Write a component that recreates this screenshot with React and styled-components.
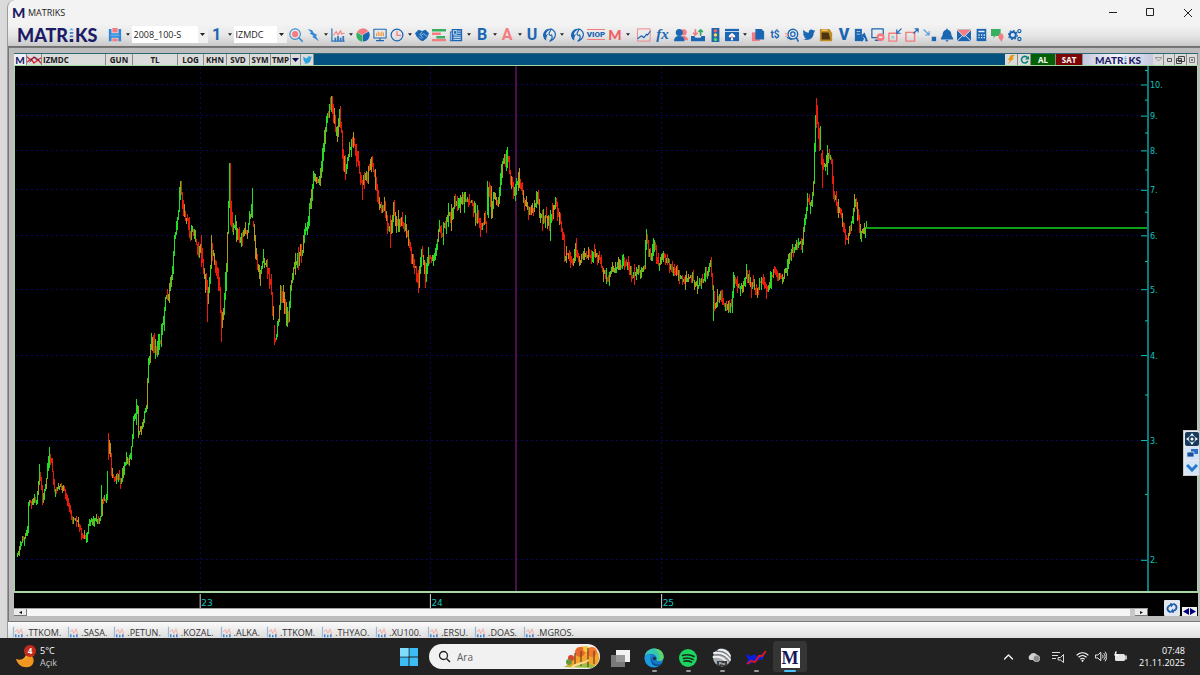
import React from "react";
import styled, { createGlobalStyle } from "styled-components";

const UI = `"Open Sans", "Noto Sans", sans-serif`;
const BLUE = "#1b66b3";
const PINK = "#f47c80";
const GREEN = "#35b060";
const NAVY = "#1c1c66";
const TEAL = "#12c2bd";

const Global = createGlobalStyle`
  * { box-sizing: border-box; }
  body { margin: 0; background: #dadada; font: 9px/12px ${UI}; color: #222; }
  button { border: 0; padding: 0; margin: 0; background: none; font: inherit; color: inherit; }
  svg { display: block; flex: none; }
`;

const Desktop = styled.div`
  height: 100vh;
  min-height: 400px;
  display: flex;
  flex-direction: column;
  overflow: hidden;
`;
const Window = styled.main`
  position: relative;
  flex: 1;
  min-height: 0;
  margin-left: 7px;
  display: flex;
  flex-direction: column;
  border-radius: 8px 0 0 0;
  border-left: 1px solid #9b9b9b;
  background: #f3f3f3;
  overflow: hidden;
`;
const TitleBar = styled.header`
  height: 25px;
  flex: none;
  display: flex;
  align-items: center;
  padding-left: 4px;
`;
const AppMark = styled.span`
  width: 15px;
  font: 900 14px/16px Lato, sans-serif;
  color: ${NAVY};
`;
const AppName = styled.h1`
  flex: 1;
  margin: 0 0 0 1px;
  font: 400 9px/12px ${UI};
`;
const WindowButtons = styled.div`
  display: flex;
  gap: 12px;
`;
const WindowButton = styled.button`
  width: 25px;
  height: 25px;
  display: grid;
  place-items: center;
`;

const Toolbar = styled.div`
  height: 22px;
  flex: none;
  display: flex;
  align-items: center;
  padding: 0 0 2px 9px;
  background: linear-gradient(#f2f2f2, #e6e6e6 50%, #c9c9c9);
  border-bottom: 1px solid #6f6f6f;
`;
const Group = styled.div`
  display: flex;
  align-items: center;
  height: 19px;
  margin-left: ${(p) => p.$gap || 0}px;
`;
const Tool = styled.button`
  width: ${(p) => p.$w || 17}px;
  height: 18px;
  display: grid;
  place-items: center;
`;
const Letter = styled.span`
  font: ${(p) => p.$font || "700 16px/16px Roboto, sans-serif"};
  color: ${(p) => p.$color || BLUE};
`;
const Viop = styled.span`
  font: 900 8px/9px Roboto, sans-serif;
  color: ${BLUE};
  border-top: 1px solid ${PINK};
  border-bottom: 1px solid ${PINK};
`;
const CaretButton = styled.button`
  width: 8px;
  height: 18px;
  display: grid;
  place-items: center;
`;
const Logo = styled.span`
  display: flex;
  align-items: center;
  gap: 1px;
  font: 900 ${(p) => p.$size}px / ${(p) => p.$size}px Lato, sans-serif;
  color: ${NAVY};
`;
const Combo = styled.label`
  position: relative;
  display: flex;
  align-items: center;
  width: ${(p) => p.$w}px;
  height: 17px;
  background: #fff;
`;
const Select = styled.select`
  appearance: none;
  width: 100%;
  height: 17px;
  border: 0;
  padding: 0 10px 0 2px;
  background: transparent;
  font: 9px/12px ${UI};
  color: #222;
`;
const ComboArrow = styled.span`
  position: absolute;
  right: 0;
  top: 0;
  width: 10px;
  height: 17px;
  display: grid;
  place-items: center;
  background: #f0f0f0;
  pointer-events: none;
`;

const Workspace = styled.section`
  flex: 1;
  min-height: 0;
  display: flex;
  flex-direction: column;
  padding: 5px 2px 5px 5px;
  border: solid #777;
  border-width: 1px 0 1px 1px;
  background: #bcbcbc;
`;
const ChartHeader = styled.div`
  height: 12px;
  flex: none;
  display: flex;
  background: #04507f;
  border-top: 1px solid #2e6673;
`;
const HeadButton = styled.button`
  width: ${(p) => p.$w}px;
  height: 11px;
  display: flex;
  align-items: center;
  justify-content: ${(p) => (p.$left ? "flex-start" : "center")};
  padding-left: ${(p) => (p.$left ? 1 : 0)}px;
  border-right: 1px solid #8a8a8a;
  background: ${(p) => p.$bg || "#dcdcdc"};
  color: ${(p) => p.$color || "#202020"};
  font: 700 8px/10px "Open Sans", sans-serif;
  overflow: hidden;
`;
const Spacer = styled.div`
  flex: 1;
`;
const Plate = styled.div`
  width: 70px;
  display: grid;
  place-items: center;
  background: linear-gradient(90deg, #c5c9e0, #f4f4fa 50%, #c5c9e0);
`;
const ChartBox = styled.div`
  flex: 1;
  min-height: 0;
  display: flex;
  background: #000;
  border: 1px solid #a5d8a0;
  border-bottom-width: 2px;
`;
const Plot = styled.svg`
  flex: 1;
  min-width: 0;
  height: 100%;
`;
const PriceAxis = styled.svg`
  width: 50px;
  height: 100%;
  overflow: visible;
`;
const ChartFooter = styled.div`
  height: 23px;
  flex: none;
  display: flex;
  background: #000;
`;
const TimeColumn = styled.div`
  flex: 1;
  min-width: 0;
`;
const TimeAxis = styled.svg`
  width: 100%;
  height: 15px;
`;
const ScrollTrack = styled.div`
  height: 8px;
  display: flex;
  justify-content: space-between;
  background: #f6f6f6;
  border-top: 1px solid #a0a0a0;
`;
const ScrollButton = styled.button`
  width: 13px;
  height: 7px;
  display: grid;
  place-items: center;
  background: #ececec;
  border: solid #777;
  border-width: 0 1px 1px 0;
`;
const ScrollEnd = styled.div`
  display: flex;
  border-left: 5px solid #c8c8c8;
`;
const FooterTools = styled.div`
  width: 50px;
  display: flex;
  align-items: flex-end;
  justify-content: flex-end;
  gap: 2px;
  padding-right: 1px;
`;
const RefreshButton = styled.button`
  width: 16px;
  height: 16px;
  display: grid;
  place-items: center;
  background: #e2e6ee;
  border-radius: 1px;
`;
const StepButtons = styled.div`
  display: flex;
  width: 15px;
  height: 9px;
  background: #f0f0f0;
`;
const StepButton = styled.button`
  flex: 1;
  display: grid;
  place-items: center;
`;
const Dock = styled.aside`
  position: absolute;
  right: 0;
  bottom: 162px;
  width: 17px;
  padding: 1px 0 1px 1px;
  display: flex;
  flex-direction: column;
  gap: 1px;
  background: #e6e8ec;
  border: 1px solid #c2c6cc;
`;
const DockButton = styled.button`
  height: ${(p) => p.$h || 13}px;
  display: grid;
  place-items: center;
  border-radius: 2px;
  background: ${(p) => p.$bg || "#d3e4f8"};
`;

const PageTabs = styled.nav`
  height: 16px;
  flex: none;
  display: flex;
  gap: 6px;
  padding: 4px 0 0 4px;
  overflow: hidden;
  background: linear-gradient(#fbfbfb, #dddddd);
`;
const PageTab = styled.a`
  display: flex;
  gap: 2px;
  color: #333;
  text-decoration: none;
  line-height: 14px;
`;

const Taskbar = styled.footer`
  height: 37px;
  flex: none;
  display: grid;
  grid-template-columns: 1fr auto 1fr;
  align-items: center;
  background: #222;
  color: #fff;
`;
const Weather = styled.button`
  position: relative;
  justify-self: start;
  display: flex;
  align-items: center;
  gap: 5px;
  margin-left: 16px;
  text-align: left;
  color: #fff;
`;
const Sub = styled.span`
  display: block;
  color: ${(p) => p.$color || "#c8c8c8"};
`;
const Badge = styled.span`
  position: absolute;
  left: 8px;
  top: 0;
  width: 12px;
  height: 12px;
  border-radius: 50%;
  background: #c42b1c;
  font: 700 8px/12px ${UI};
  text-align: center;
`;
const Apps = styled.div`
  display: flex;
  align-items: center;
  margin-left: 6px;
`;
const SearchBox = styled.label`
  width: 171px;
  height: 25px;
  display: flex;
  align-items: center;
  gap: 6px;
  margin: 0 3px 0 10px;
  padding-left: 9px;
  border-radius: 13px;
  background: #f1f1f1;
  overflow: hidden;
`;
const SearchInput = styled.input`
  flex: 1;
  min-width: 0;
  border: 0;
  padding: 0;
  background: transparent;
  font: 10px/14px ${UI};
  color: #555;
  outline: 0;
  &::placeholder { color: #606060; opacity: 1; }
`;
const AppButton = styled.button`
  width: 34px;
  height: 31px;
  display: flex;
  flex-direction: column;
  align-items: center;
  justify-content: flex-end;
  gap: 2px;
  border-radius: 3px;
  background: ${(p) => (p.$active ? "#353535" : "transparent")};
`;
const Indicator = styled.span`
  width: ${(p) => (p.$active ? 12 : 5)}px;
  height: 2px;
  border-radius: 1px;
  background: ${(p) => (p.$active ? "#4cc2ff" : p.$off ? "transparent" : "#9a9a9a")};
`;
const MTile = styled.span`
  width: 19px;
  height: 20px;
  background: #fff;
  color: #17175c;
  text-align: center;
  font: 700 18px/20px "Liberation Serif", serif;
`;
const Tray = styled.div`
  justify-self: end;
  display: flex;
  align-items: center;
  margin-right: 15px;
`;
const TrayButton = styled.button`
  width: ${(p) => p.$w}px;
  height: 24px;
  display: grid;
  place-items: center;
`;
const Clock = styled.button`
  text-align: right;
  color: #fff;
  margin-left: 8px;
`;

/* ---------- icons ---------- */
const s = (stroke, w = 1.6) => ({ fill: "none", stroke, strokeWidth: w, strokeLinecap: "round", strokeLinejoin: "round" });
const flame = (
  <g>
    <path d="M5 14.500a7 7 0 0 1-2-11a7 7 0 0 1 7-2.300c-4 2.300-5.500 4-5.500 7c1-1 1.500-1.200 2.500-1.200c-2 2.500-2.500 5-2 7.500z" fill={BLUE} />
    <path d="M10 1c4 1 6 5 5 8c-1 4-3 5-6 6c3-3 3-4 2-7c-2 1-3 0-3-2c1-2 2-3 2-5z" {...s(BLUE, 1.4)} />
  </g>
);
const bird = (c) => (
  <path d="M15 4l-1.600 1.400C13.600 11 9 15 1 13.200c2 0 3-.5 4-1.400c-1.500-.2-2.400-1-2.800-2.200h1.300C1.900 9 1.200 7.800 1.200 6.300l1.300.4C1.200 5.500.9 4 1.700 2.300C3.300 4.200 5.300 5.300 7.700 5.500C7.500 1.800 11 .8 12.900 2.900L15 2.400l-1 1.500z" fill={c} />
);
const ICONS = {
  floppy: (
    <g>
      <path d="M1 1h3v5h8V1h3v14h-3v-4H4v4H1z" fill="#2f86d4" />
      <path d="M5 0h6v5H5zM5 12h6v3H5z" fill={PINK} />
      <path d="M3 8.500h10" stroke="#62b1f2" strokeWidth="2" />
    </g>
  ),
  zoom: (
    <g>
      <circle cx="7" cy="7" r="6" {...s("#3a8bd0", 1.3)} />
      <circle cx="7" cy="7" r="3.500" fill={PINK} />
      <path d="M11.500 11.500L15 15" {...s("#3a8bd0", 1.8)} />
    </g>
  ),
  bolt: <path d="M2 1l5 1.500L9 6l4 2-2 1 4 6-8-5 2-1-5-3 2-1z" fill="#2f86d4" />,
  bars: (
    <g>
      <path d="M1 1v14h14" {...s("#2f78c0", 1.4)} />
      <path d="M4 15v-4h2v4zM7 15V9h2v6zM10 15v-4h2v4zM13 15V9h2v6z" fill="#2f78c0" />
      <path d="M3 8l3-4 2 4 3-5 1 4 3-1" {...s(PINK, 1.2)} />
    </g>
  ),
  tab: (
    <g>
      <path d="M2 1v14" stroke="#9db7d6" strokeWidth="1.600" />
      <path d="M4 8l3-3 2 5 3-6 2 6v5" fill="none" stroke="#f0b4b0" strokeWidth="1.400" />
      <path d="M5 15v-4M9 15v-3M13 15v-4" fill="none" stroke="#3f87cf" strokeWidth="2" />
    </g>
  ),
  pie: (
    <g>
      <path d="M8 8L1 5a7.500 7.500 0 0 1 13-1.500z" fill={PINK} />
      <path d="M8 8l6.500-4A7.500 7.500 0 0 1 8 15.500z" fill={BLUE} />
      <path d="M7.500 8.500L1 5a7.500 7.500 0 0 0 6.500 10.500z" fill={GREEN} />
    </g>
  ),
  monitor: (
    <g>
      <rect x="1" y="1.500" width="14" height="10" {...s(BLUE, 1.2)} />
      <path d="M4 9V6M6 9V4M8 9V5M10 9V4M12 9V5" stroke="#f0963c" strokeWidth="1.200" />
      <path d="M8 12v2M4 14.500h8" {...s(BLUE, 1.4)} />
    </g>
  ),
  clock: (
    <g>
      <circle cx="8" cy="8" r="6.700" {...s(BLUE, 1.4)} />
      <path d="M8 4v4.500h4" {...s(PINK, 1.5)} />
    </g>
  ),
  hands: (
    <g>
      <path d="M0 6l4-4 4 1.500L12 2l4 4-2 5-5 4-3-1-4-4z" fill={BLUE} />
      <path d="M8 4.500L5.500 7.500l2 .5L10 6.500l4 3.500M5 10l2 2M7 9l2 2" {...s("#d5e5f5", 0.7)} />
    </g>
  ),
  lines: (
    <g>
      <path d="M0 1h16v3H0zM5 9h10v3H5z" fill={GREEN} />
      <path d="M0 5h10v3H0zM0 12.500h16v2.500H0z" fill={PINK} />
    </g>
  ),
  news: (
    <g>
      <path d="M3 1h12v14H1V4h2z" fill={BLUE} />
      <path d="M5 3h4v4H5zM10 3.500h3.500M10 6h3.500M5 9h8.500M5 11h8.500M5 13h8.500M2.500 5v9" stroke="#e8eef6" strokeWidth="1" fill="none" />
    </g>
  ),
  flame,
  trend: (
    <g>
      <rect x="1" y="1" width="14" height="14" {...s(PINK, 1)} />
      <path d="M1 12l4-3 3 2 3-4 1 1 3-4" {...s(BLUE, 1.4)} />
    </g>
  ),
  people: (
    <g>
      <circle cx="11" cy="5" r="3.500" fill={PINK} />
      <path d="M8 14c0-4 1-5 3-5s5 1 5 5z" fill={PINK} />
      <circle cx="6" cy="5" r="4" fill={BLUE} />
      <path d="M0 15c0-4 2-6 6-6s6 2 6 6z" fill={BLUE} />
    </g>
  ),
  trays: (
    <g>
      <path d="M0 9h4l1 2h6l1-2h4v6H0z" fill={BLUE} />
      <path d="M5 2v6M3 6l2 2 2-2" {...s(PINK, 2)} />
      <path d="M11 8V2M9 4l2-2 2 2" {...s(GREEN, 2)} />
    </g>
  ),
  traffic: (
    <g>
      <rect x="4" y="0" width="9" height="16" fill={BLUE} />
      <circle cx="8.500" cy="3" r="2" fill="#ff6060" />
      <circle cx="8.500" cy="8" r="2" fill="#ffe040" />
      <circle cx="8.500" cy="13" r="2" fill="#50d860" />
    </g>
  ),
  calendar: (
    <g>
      <path d="M0 1h16v14H0z" fill={BLUE} />
      <path d="M0 4h16" stroke="#d7e4f2" strokeWidth="1" />
      <path d="M8 13V8M5.500 9.500L8 7l2.500 2.500" {...s("#fff", 2.4)} />
      <path d="M8 12V8.500" stroke={PINK} strokeWidth="1.500" />
    </g>
  ),
  copy: (
    <g>
      <path d="M1 5h9v10H1z" fill={PINK} />
      <path d="M5 1h7l3 3v9H5z" fill={BLUE} />
    </g>
  ),
  magnify: (
    <g>
      <circle cx="9" cy="7" r="5.500" {...s(BLUE, 1.6)} />
      <circle cx="9" cy="7" r="2.500" {...s(BLUE, 1.4)} />
      <path d="M13 11l2 4M3 11l4 2" {...s(BLUE, 1.8)} />
      <path d="M0 10l4-2M0 6l3 1" {...s(PINK, 1)} />
    </g>
  ),
  bird: bird(BLUE),
  gold: (
    <g>
      <path d="M1 1h11l3 5v9H1z" fill="#c18c24" />
      <path d="M3 5h8l2 8H3z" fill="#4a3414" />
      <path d="M3 2.500h7" stroke="#efcf78" strokeWidth="1.500" />
    </g>
  ),
  building: (
    <g>
      <path d="M1 1h8v14H1z" fill={BLUE} />
      <path d="M9 8l3-3 4 10h-3l-1-4-2 4H8z" fill={BLUE} />
      <path d="M3 4h4M3 7h4M10 10l3 3" stroke="#d8e6f4" strokeWidth=".8" />
    </g>
  ),
  blocked: (
    <g>
      <rect x="1" y="1" width="13" height="10" {...s(BLUE, 1.4)} />
      <path d="M5 14h5" {...s(BLUE, 1.5)} />
      <circle cx="11" cy="10.500" r="4.500" fill={PINK} />
      <path d="M9 10.500h4" stroke="#fff" strokeWidth="1.500" />
    </g>
  ),
  boxIn: (
    <g>
      <rect x="1" y="6" width="9" height="9" {...s(PINK, 1.6)} />
      <rect x="4" y="9" width="3" height="3" fill="#9cc" />
      <path d="M15 1l-5 5M10 2v4h4" {...s(BLUE, 1.3)} />
    </g>
  ),
  boxOut: (
    <g>
      <rect x="1" y="5" width="10" height="10" {...s(PINK, 1.6)} />
      <path d="M10 6l5-5M11.500 1H15v3.500" {...s(BLUE, 1.3)} />
    </g>
  ),
  arrowBox: (
    <g>
      <path d="M1 2l6 6M7 4v4H3" {...s("#5b9cd8", 1.3)} />
      <rect x="10" y="10" width="5" height="5" fill={BLUE} />
    </g>
  ),
  bell: <path d="M8 0l1 2c3 1 4 3 4 6l2 4v1H1v-1l2-4c0-3 1-5 4-6zM6 14h4l-2 2z" fill={BLUE} />,
  mail: (
    <g>
      <path d="M0 2h16v13H0z" fill={BLUE} />
      <path d="M0 2h16l-8 8z" fill={PINK} />
      <path d="M0 15l6-6M16 15l-6-6M0 2l8 8 8-8" {...s("#f2f2f2", 1)} />
    </g>
  ),
  calc: (
    <g>
      <rect x="3" y="1" width="11" height="14" fill={BLUE} />
      <path d="M5 4h7M5 8h1.500M8 8h1.500M11 8h1.500M5 11h1.500M8 11h1.500M11 11h1.500" stroke="#e3edf8" strokeWidth="1.600" />
    </g>
  ),
  chat: (
    <g>
      <path d="M0 1h11v8H5l-2 3V9H0z" fill={GREEN} />
      <path d="M11 6a4 4 0 0 1 2 7l-1 3-2-3a4 4 0 0 1 1-7z" fill={PINK} />
    </g>
  ),
  gears: (
    <g>
      <circle cx="5.500" cy="8" r="3.500" {...s(BLUE, 2.2)} />
      <circle cx="5.500" cy="8" r="5.200" fill="none" stroke={BLUE} strokeWidth="1.200" strokeDasharray="2 2" />
      <circle cx="13" cy="3.500" r="1.800" {...s(BLUE, 1.4)} />
      <circle cx="13" cy="12.500" r="1.800" {...s(BLUE, 1.4)} />
    </g>
  ),
};
const Icon = ({ name, size = 14 }) => (
  <svg width={size} height={size} viewBox="0 0 16 16" aria-hidden="true">
    {ICONS[name]}
  </svg>
);
const Caret = ({ w = 5 }) => (
  <svg width={w} height="3" viewBox="0 0 5 3" aria-hidden="true">
    <path d="M0 0h5L2.500 3z" fill="#222" />
  </svg>
);
const BrandLogo = ({ size }) => (
  <Logo $size={size}>
    MATR
    <svg width={Math.round(size / 4)} height={Math.round(size * 0.75)} viewBox="0 0 4 12" aria-hidden="true">
      <path d="M2 0l2 2H0z" fill="#58b7e8" />
      <path d="M.5 3.500h3v1.500h-3zM.5 6.500h3V8h-3z" fill="#3f7cc0" />
      <path d="M.5 9.500h3V12h-3z" fill={NAVY} />
    </svg>
    KS
  </Logo>
);

/* ---------- toolbar contents ---------- */
const TOOL_GROUPS = [
  { gap: 1, items: ["zoom", "bolt", "|", "bars", "|"] },
  { gap: 0, items: ["pie", "monitor", "clock", "|"] },
  { gap: 0, items: ["hands", "lines", "news", "|"] },
  { gap: 1, items: ["B", "|", "A", "|", "U", "flame", "|"] },
  { gap: 3, items: ["flame", "VIOP", "M", "|"] },
  { gap: 4, items: ["trend", "fx", "people", "trays", "traffic", "calendar", "|"] },
  { gap: 1, items: ["copy", "t$", "magnify", "bird", "gold"] },
  { gap: 1, items: ["V", "building", "blocked", "boxIn", "boxOut"] },
  { gap: 1, items: ["arrowBox", "bell", "mail", "calc", "chat", "gears"] },
];
const LETTERS = {
  A: { $color: PINK },
  M: { $color: "#ee5f63", $font: "900 14px/16px Lato, sans-serif" },
  fx: { $font: 'italic 700 15px/15px "Liberation Serif", serif' },
  "t$": { $font: "700 10px/12px Roboto, sans-serif" },
  V: { $font: "900 16px/16px Roboto, sans-serif" },
};
function ToolItem({ id }) {
  if (id === "|") return <CaretButton aria-label="Menü"><Caret w={4} /></CaretButton>;
  if (id === "VIOP") return <Tool $w={21} aria-label="VIOP"><Viop>VIOP</Viop></Tool>;
  if (ICONS[id]) return <Tool aria-label={id}><Icon name={id} /></Tool>;
  return (
    <Tool $w={id === "fx" ? 20 : 17}>
      <Letter {...LETTERS[id]}>{id}</Letter>
    </Tool>
  );
}

/* ---------- price series ---------- */
const PATH =
  "17,556 20,545 25,533 27,527 28,503 33,500 36,500 38,486 39,472 41,487 42,499 45,486 47,468 49,454 51,462 53,482 54,492 58,485 62,488 66,495 69,510 72,520 75,518 79,525 82,536 86,537 88,526 91,520 94,519 98,522 101,516 102,500 106,498 107,470 108,440 110,455 111,474 114,478 118,476 120,482 123,468 126,458 128,464 130,454 132,438 133,415 135,416 137,408 138,432 141,427 143,420 144,412 146,408 147,380 148,360 150,350 151,338 153,346 156,352 158,345 161,335 163,318 165,298 168,300 170,285 172,270 174,240 176,228 178,208 180,186 182,200 184,215 187,221 189,238 192,230 195,236 198,255 200,243 203,270 205,280 207,300 209,280 211,248 214,258 217,278 219,292 221,325 224,300 226,265 228,205 229,170 230,205 232,232 235,225 239,238 243,232 247,228 251,213 253,225 255,250 258,272 260,275 263,258 266,265 269,275 271,290 273,320 274,340 276,332 279,308 280,292 283,300 286,322 288,315 290,288 292,270 296,262 299,254 302,250 304,232 307,225 310,200 313,178 316,178 319,182 322,152 324,140 326,115 328,112 331,101 333,112 335,130 337,130 339,116 341,135 343,160 345,166 348,155 350,150 353,138 355,145 358,165 361,184 364,178 367,172 371,163 375,182 378,200 381,210 384,205 387,225 390,226 393,214 397,222 401,220 405,226 408,240 412,258 415,270 418,284 421,252 425,278 428,252 431,260 434,258 437,240 438,228 442,232 445,222 447,213 450,218 454,205 459,203 463,197 466,200 470,201 473,210 477,214 480,228 484,222 486,224 488,190 490,196 491,220 493,192 495,200 497,208 499,190 501,168 504,160 507,156 510,175 513,195 515,190 518,176 521,190 525,205 528,210 532,210 535,205 537,197 540,218 545,217 549,225 553,210 556,206 559,220 562,233 563,236 564,258 568,254 572,262 575,248 579,262 583,254 588,256 593,255 598,255 602,268 605,276 608,279 611,268 616,269 620,262 626,262 628,270 633,275 637,270 642,268 644,265 645,240 646,232 648,252 651,252 654,247 658,263 662,256 667,260 671,268 676,270 683,280 690,278 697,285 702,280 706,272 710,266 712,285 714,305 716,300 720,295 725,307 731,306 734,280 738,288 742,285 746,275 751,285 756,292 761,278 766,290 769,285 774,268 778,275 782,280 787,262 792,250 797,242 802,244 804,220 807,200 811,203 813,182 814,150 815,115 816,108 817,120 819,150 822,165 825,165 828,157 831,160 833,192 837,205 840,208 843,225 846,238 850,228 853,210 855,202 858,220 860,234 863,231 866,228";
/* long wicks: bar position -> [high, low] */
const WICKS = {
  39: [464, 485], 42: [485, 505], 49: [447, 468], 101: [485, 517], 108: [433, 460], 126: [452, 465], 136: [399, 425],
  151: [333, 350], 180: [181, 200], 207: [280, 322], 221: [310, 342], 229: [163, 208], 230: [163, 225], 252: [188, 218],
  274: [325, 345], 331: [96, 112], 345: [155, 180], 353: [132, 148], 362: [180, 200], 371: [157, 172], 390: [215, 248],
  418: [270, 293], 425: [262, 288], 480: [218, 237], 487: [181, 215], 507: [147, 168], 536: [191, 208], 646: [229, 250],
  653: [238, 256], 713: [285, 321], 733: [272, 298], 816: [98, 128], 820: [126, 150], 822: [150, 188], 827: [145, 175], 854: [194, 212],
};
const FALLING = [230, 816, 108, 221, 274];
const RISING = [252, 487, 507, 713, 820, 331];
function buildBars() {
  const pts = PATH.split(" ").map((p) => p.split(",").map(Number));
  let seed = 11;
  const rnd = () => {
    seed = (seed * 16807) % 2147483647;
    return seed / 2147483647;
  };
  const out = { up: "", down: "", flat: "" };
  let i = 0;
  let prev = pts[0][1];
  for (let x = 17; x <= 866; x++) {
    while (i < pts.length - 2 && pts[i + 1][0] < x) i++;
    const [x0, y0] = pts[i];
    const [x1, y1] = pts[i + 1];
    const amp = x < 150 ? 4 : x < 560 ? 8 : 6;
    const y = y0 + ((y1 - y0) * (x - x0)) / (x1 - x0) + (rnd() - 0.5) * amp;
    let hi = Math.min(y, prev) - rnd() * rnd() * amp * 1.7;
    let lo = Math.max(y, prev) + rnd() * rnd() * amp * 1.7 + 1;
    if (WICKS[x]) {
      hi = WICKS[x][0];
      lo = WICKS[x][1];
    }
    let kind = rnd() < 0.22 ? "flat" : y <= prev ? "up" : "down";
    if (FALLING.includes(x)) kind = "down";
    if (RISING.includes(x)) kind = "up";
    out[kind] += `M${x}.5 ${Math.round(hi)}V${Math.round(lo)}`;
    prev = y;
  }
  return out;
}
const BARS = buildBars();

const TOP = 66;
const H = 525;
const priceY = (v) => 85 + Math.log10(10 / v) * 680;
const PRICES = [10, 9, 8, 7, 6, 5, 4, 3, 2];
const HALVES = [10.5, 9.5, 8.5, 7.5, 6.5, 5.5, 4.5, 3.5, 2.5];
const pct = (y) => `${(((y - TOP) / H) * 100).toFixed(2)}%`;
const YEARS = [
  ["23", 200],
  ["24", 430],
  ["25", 661],
];

function PriceChart() {
  return (
    <ChartBox>
      <Plot viewBox={`15 ${TOP} 1132 ${H}`} preserveAspectRatio="none" role="img" aria-label="IZMDC">
        <g stroke="#07075e" strokeWidth="1" strokeDasharray="2 3">
          {PRICES.map((v) => (
            <path key={v} d={`M16 ${Math.round(priceY(v)) - 0.5}H1146`} />
          ))}
          {YEARS.map(([n, x]) => (
            <path key={n} d={`M${x}.5 67V591`} />
          ))}
        </g>
        <path d="M516 66V591" stroke="#47104b" strokeWidth="2" />
        <path d={BARS.flat} stroke="#b09a1c" strokeWidth="1" />
        <path d={BARS.down} stroke="#ec1a0a" strokeWidth="1" />
        <path d={BARS.up} stroke="#22dc26" strokeWidth="1" />
        <path d="M866 228H1147" stroke="#0fa01b" strokeWidth="2" />
      </Plot>
      <PriceAxis aria-hidden="true">
        <line x1="1" x2="1" y1="0" y2="100%" stroke="#087b7c" strokeWidth="2" />
        {PRICES.map((v) => (
          <React.Fragment key={v}>
            <line x1="-6" x2="0" y1={pct(priceY(v))} y2={pct(priceY(v))} stroke={TEAL} />
            <text x="3" y={pct(priceY(v))} dy="3" fill={TEAL} fontFamily="DejaVu Sans, sans-serif" fontSize="8">
              {v}.
            </text>
          </React.Fragment>
        ))}
        {HALVES.map((v) => (
          <line key={v} x1="-2" x2="1" y1={pct(priceY(v))} y2={pct(priceY(v))} stroke={TEAL} />
        ))}
      </PriceAxis>
    </ChartBox>
  );
}

const TABS = ["TTKOM", "SASA", "PETUN", "KOZAL", "ALKA", "TTKOM", "THYAO", "XU100", "ERSU", "DOAS", "MGROS"];
const FIELDS = [
  ["GUN", 27],
  ["TL", 45],
  ["LOG", 26],
  ["KHN", 23],
  ["SVD", 23],
  ["SYM", 21],
  ["TMP", 20],
];

export default function App() {
  return (
    <Desktop>
      <Global />
      <Window>
        <TitleBar>
          <AppMark>M</AppMark>
          <AppName>MATRIKS</AppName>
          <WindowButtons>
            <WindowButton aria-label="Küçült">
              <svg width="9" height="9" viewBox="0 0 9 9"><path d="M0 4.500h8" stroke="#222" /></svg>
            </WindowButton>
            <WindowButton aria-label="Ekranı kapla">
              <svg width="9" height="9" viewBox="0 0 9 9"><path d="M.5.500h7v7h-7z" fill="none" stroke="#222" /></svg>
            </WindowButton>
            <WindowButton aria-label="Kapat">
              <svg width="8" height="8" viewBox="0 0 8 8"><path d="M0 0l8 8M8 0L0 8" stroke="#222" /></svg>
            </WindowButton>
          </WindowButtons>
        </TitleBar>

        <Toolbar>
          <BrandLogo size={18} />
          <Group $gap={9}>
            <Tool aria-label="Kaydet"><Icon name="floppy" /></Tool>
            <ToolItem id="|" />
          </Group>
          <Combo $w={76}>
            <Select aria-label="Sayfa"><option>2008_100-S</option></Select>
            <ComboArrow><Caret /></ComboArrow>
          </Combo>
          <Group>
            <Tool $w={18}><Letter>1</Letter></Tool>
            <ToolItem id="|" />
          </Group>
          <Combo $w={53}>
            <Select aria-label="Sembol"><option>IZMDC</option></Select>
            <ComboArrow><Caret /></ComboArrow>
          </Combo>
          {TOOL_GROUPS.map((g, i) => (
            <Group key={i} $gap={g.gap}>
              {g.items.map((id, k) => (
                <ToolItem key={k} id={id} />
              ))}
            </Group>
          ))}
        </Toolbar>

        <Workspace>
          <ChartHeader>
            <HeadButton $w={13} $color={NAVY} $bg="#eef0f8">
              <Letter $color={NAVY} $font="900 10px/10px Lato, sans-serif">M</Letter>
            </HeadButton>
            <HeadButton $w={15} aria-label="Grafik">
              <svg width="14" height="10" viewBox="0 0 14 10">
                <path d="M0 2l4 3 3-3 3 3 4-2M0 7l4-3 3 4 4-3 3 3" {...s("#d8242c", 1.3)} />
                <path d="M3 7c3-6 6-6 9-1" {...s(NAVY, 0.8)} />
              </svg>
            </HeadButton>
            <HeadButton $w={64} $left>IZMDC</HeadButton>
            {FIELDS.map(([n, w]) => (
              <HeadButton key={n} $w={w}>{n}</HeadButton>
            ))}
            <HeadButton $w={10} aria-label="Aç">
              <svg width="7" height="4" viewBox="0 0 7 4"><path d="M0 0h7L3.500 4z" fill="#0a0a50" /></svg>
            </HeadButton>
            <HeadButton $w={13} aria-label="Twitter">
              <svg width="11" height="10" viewBox="0 0 16 16">{bird("#2aa3dc")}</svg>
            </HeadButton>
            <Spacer />
            <HeadButton $w={13} aria-label="Hızlı emir">
              <svg width="8" height="9" viewBox="0 0 8 9"><path d="M4 0h4L5 3h2L1 9l2-4H1z" fill="#e8960c" /></svg>
            </HeadButton>
            <HeadButton $w={13} aria-label="Yenile">
              <svg width="9" height="9" viewBox="0 0 9 9">
                <path d="M7.500 6.500A3.300 3.300 0 1 1 7 2.200" {...s("#0b8478", 1.6)} />
                <path d="M5 4.500h4V1z" fill="#0b8478" />
              </svg>
            </HeadButton>
            <HeadButton $w={25} $bg="#046004" $color="#fff">AL</HeadButton>
            <HeadButton $w={27} $bg="#7c0508" $color="#fff">SAT</HeadButton>
            <Plate><BrandLogo size={10} /></Plate>
            <HeadButton $w={11} aria-label="Menü">
              <svg width="7" height="5" viewBox="0 0 7 5"><path d="M0 .5h7L3.500 4z" fill="none" stroke="#888" strokeWidth=".8" /></svg>
            </HeadButton>
            <HeadButton $w={11} aria-label="Simge">
              <svg width="5" height="5" viewBox="0 0 5 5"><path d="M.5 1.500h4v3h-4z" fill="none" stroke="#555" /></svg>
            </HeadButton>
            <HeadButton $w={12} aria-label="Pencere">
              <svg width="9" height="8" viewBox="0 0 9 8"><path d="M2.500.5h6v5h-6zM.5 2.500h5v5h-5zM1 4.500h5" fill="none" stroke="#444" /></svg>
            </HeadButton>
            <HeadButton $w={11} aria-label="Kapat">
              <svg width="6" height="6" viewBox="0 0 6 6"><path d="M.5.500h5v5h-5zM2 2l2 2M4 2L2 4" fill="none" stroke="#666" strokeWidth=".8" /></svg>
            </HeadButton>
          </ChartHeader>

          <PriceChart />

          <ChartFooter>
            <TimeColumn>
              <TimeAxis aria-hidden="true">
                {YEARS.map(([n, x]) => {
                  const at = `${(((x - 14) / 1133) * 100).toFixed(2)}%`;
                  return (
                    <React.Fragment key={n}>
                      <line x1={at} x2={at} y1="1" y2="15" stroke="#d8d8d8" />
                      <text x={at} dx="1" y="13" fill={TEAL} fontFamily="DejaVu Sans, sans-serif" fontSize="9">{n}</text>
                    </React.Fragment>
                  );
                })}
              </TimeAxis>
              <ScrollTrack>
                <ScrollButton aria-label="Sola kaydır">
                  <svg width="3" height="3" viewBox="0 0 3 3"><path d="M3 0v3L0 1.500z" fill="#111" /></svg>
                </ScrollButton>
                <ScrollEnd>
                  <ScrollButton aria-label="Sağa kaydır">
                    <svg width="3" height="3" viewBox="0 0 3 3"><path d="M0 0v3l3-1.500z" fill="#111" /></svg>
                  </ScrollButton>
                </ScrollEnd>
              </ScrollTrack>
            </TimeColumn>
            <FooterTools>
              <RefreshButton aria-label="Grafiği yenile">
                <svg width="12" height="12" viewBox="0 0 12 12">
                  <path d="M4 10C0 8 1 4 5 3M8 2c4 2 3 6-1 7" {...s("#1b5cab", 1.8)} />
                  <path d="M4 1l4 1-3 3.500zM8 11L4 10l3-3.500z" fill="#1b5cab" />
                </svg>
              </RefreshButton>
              <StepButtons>
                <StepButton aria-label="Geri">
                  <svg width="6" height="7" viewBox="0 0 6 7"><path d="M6 0v7L0 3.500z" fill="#00007c" /></svg>
                </StepButton>
                <StepButton aria-label="İleri">
                  <svg width="6" height="7" viewBox="0 0 6 7"><path d="M0 0v7l6-3.500z" fill="#00007c" /></svg>
                </StepButton>
              </StepButtons>
            </FooterTools>
          </ChartFooter>
        </Workspace>

        <PageTabs>
          {TABS.map((t, i) => (
            <PageTab key={i} href="#">
              <Icon name="tab" size={12} />.{t}.
            </PageTab>
          ))}
        </PageTabs>

        <Dock>
          <DockButton $bg="#173a5c" $h={14} aria-label="Taşı">
            <svg width="12" height="12" viewBox="0 0 12 12">
              <path d="M6 0l2 3H4zM6 12l2-3H4zM0 6l3-2v4zM12 6L9 4v4z" fill="#fff" />
              <circle cx="6" cy="6" r="1.500" fill="#fff" />
              <circle cx="6" cy="6" r="3.500" fill="none" stroke="#9db4c8" strokeWidth=".7" />
            </svg>
          </DockButton>
          <DockButton aria-label="Pencereler">
            <svg width="11" height="9" viewBox="0 0 11 9"><path d="M4 0h7v5H4z" fill="#2a6cc0" /><path d="M0 3h7v5H0z" fill="#1c4f9c" stroke="#d3e4f8" strokeWidth=".8" /></svg>
          </DockButton>
          <DockButton aria-label="Aşağı">
            <svg width="12" height="8" viewBox="0 0 12 8"><path d="M1 1l5 5 5-5" fill="none" stroke="#2a78cc" strokeWidth="3" /></svg>
          </DockButton>
        </Dock>
      </Window>

      <Taskbar>
        <Weather>
          <svg width="19" height="24" viewBox="0 0 19 24">
            <path d="M0 14c6 2 10-1 10-6c7 1 9 8 6 12c-4 4-13 3-16-6z" fill="#f5a32a" />
            <path d="M0 14c6 3 12 2 14-6c5 4 5 9 2 12c-4 4-13 3-16-6z" fill="#ee8a18" opacity=".5" />
          </svg>
          <Badge>4</Badge>
          <span>
            5°C
            <Sub>Açık</Sub>
          </span>
        </Weather>

        <Apps>
          <TrayButton $w={20} aria-label="Başlat">
            <svg width="18" height="18" viewBox="0 0 18 18">
              <path d="M0 0h8.500v8.500H0zM9.500 0H18v8.500H9.500zM0 9.500h8.500V18H0zM9.500 9.500H18V18H9.500z" fill="#3cbdf5" />
              <path d="M0 0h8.500v8.500H0z" fill="#7fdcfb" />
            </svg>
          </TrayButton>
          <SearchBox>
            <svg width="13" height="13" viewBox="0 0 13 13">
              <circle cx="5.500" cy="5.500" r="4" fill="none" stroke="#222" strokeWidth="1.300" />
              <path d="M8.500 8.500l3.500 3.500" stroke="#222" strokeWidth="1.500" />
            </svg>
            <SearchInput placeholder="Ara" aria-label="Ara" />
            <svg width="37" height="25" viewBox="0 0 37 25">
              <path d="M1 23c6-3 10-8 12-16c3-6 9-5 12-3c5-2 10 2 11 8c1 6-3 11-8 11z" fill="#f6a42c" />
              <path d="M0 23c7-1 14-2 25-4l8 3-4 2z" fill="#9bbf45" />
              <circle cx="17" cy="8" r="5" fill="#e9672b" />
              <circle cx="29" cy="8" r="5" fill="#f2782e" />
              <circle cx="23" cy="5" r="3" fill="#f7c843" />
              <circle cx="8" cy="14" r="3" fill="#d8452a" />
              <circle cx="6" cy="18" r="3" fill="#69963a" />
              <path d="M18 7v15M25 4v19M31 7v13M12 9v11" stroke="#6b4423" strokeWidth="1.200" />
              <path d="M8 24c6-6 10-3 18-8" fill="none" stroke="#f9dc8d" strokeWidth="2" />
            </svg>
          </SearchBox>
          <AppButton aria-label="Görev görünümü">
            <svg width="19" height="18" viewBox="0 0 19 18">
              <path d="M5 0h14v12H5z" fill="#f2f2f2" />
              <path d="M0 5h14v12H0z" fill="#8a8a8a" opacity=".85" />
            </svg>
            <Indicator $off />
          </AppButton>
          <AppButton aria-label="Edge">
            <svg width="20" height="20" viewBox="0 0 20 20">
              <circle cx="10" cy="10" r="9.500" fill="#1778c8" />
              <path d="M.6 9C1 3 6 .4 10 .4c6 0 9.600 4 9.600 8.500 0 4-5 5-7 3.500 1-4-2-6.500-5-6.500S2 6 .6 9z" fill="#37c6b4" />
              <path d="M10 .4c6 0 9.600 4 9.600 8.500 0 3-3 4-5 4C17 7 14 3 10 .4z" fill="#5ad66a" />
              <path d="M7 7c-3 5 1 11 7 11.500C6 21 .500 16 .600 9.500 2 6 5 6 7 7z" fill="#1c9be0" />
              <path d="M8 10c-1 5 4 8 9.500 5.500C13 21 5 17 8 10z" fill="#0c4f92" />
              <circle cx="10.500" cy="10.500" r="1.800" fill="#1a3550" />
            </svg>
            <Indicator />
          </AppButton>
          <AppButton aria-label="Spotify">
            <svg width="20" height="20" viewBox="0 0 20 20">
              <circle cx="10" cy="10" r="9" fill="#1ed35f" />
              <path d="M4.500 7.500c4-1.300 8-1 11.500 1M5.500 10.500c3.500-1 6.500-.6 9.500 1M6 13.300c3-.8 5-.5 7.500.8" {...s("#132a1a", 1.6)} />
            </svg>
            <Indicator />
          </AppButton>
          <AppButton aria-label="Google Earth Pro">
            <svg width="20" height="20" viewBox="0 0 20 20">
              <circle cx="10" cy="9.500" r="9" fill="#a9adb2" />
              <path d="M2 5c6-1 12 1 16 7M1.500 9c6-1 10 1 13 5M7 1.800c5-.3 9 2 11 6" {...s("#eef0f2", 1.8)} />
              <path d="M3 7c6-1 11 1 14 6M5 3.500c5-.6 10 1.500 13 6" {...s("#6e7277", 1)} />
              <path d="M5 13h10v5H5z" fill="#3c3f43" />
              <text x="10" y="17" fill="#fff" fontSize="4" textAnchor="middle" fontFamily="Roboto, sans-serif">Pro</text>
            </svg>
            <Indicator />
          </AppButton>
          <AppButton aria-label="Grafik uygulaması">
            <svg width="20" height="20" viewBox="0 0 20 20">
              <path d="M0 6l5 2 4-2 2 3 5-3 3-1-2 6-7 2-6 3-4 0 2-4z" fill="#0b1ed8" />
              <path d="M1 16l4-3 4 1 4-6 3 0 4-5" fill="none" stroke="#e8141c" strokeWidth="1.800" />
            </svg>
            <Indicator />
          </AppButton>
          <AppButton $active aria-label="Matriks">
            <MTile>M</MTile>
            <Indicator $active />
          </AppButton>
        </Apps>

        <Tray>
          <TrayButton $w={24} aria-label="Gizli simgeler">
            <svg width="9" height="6" viewBox="0 0 9 6"><path d="M.5 5l4-4 4 4" {...s("#fff", 1.2)} /></svg>
          </TrayButton>
          <TrayButton $w={26} aria-label="OneDrive">
            <svg width="13" height="11" viewBox="0 0 13 11">
              <path d="M3 9a3 3 0 0 1 0-5a4 4 0 0 1 7 0a3 3 0 0 1 0 5z" fill="#d2d2d2" />
              <circle cx="9.500" cy="7.500" r="3.300" fill="#8b8b8b" stroke="#ddd" strokeWidth=".6" />
            </svg>
          </TrayButton>
          <TrayButton $w={25} aria-label="Ses listesi">
            <svg width="13" height="12" viewBox="0 0 13 12">
              <path d="M0 1.500h8M0 4.500h6M0 7.500h4" stroke="#ddd" />
              <path d="M6.500 6.500h2l3-3v8l-3-2.500h-2z" {...s("#ddd", 1)} />
            </svg>
          </TrayButton>
          <TrayButton $w={22} aria-label="Wi-Fi">
            <svg width="13" height="11" viewBox="0 0 13 11">
              <path d="M1 4a8 8 0 0 1 11 0M2.800 6a5.500 5.500 0 0 1 7.400 0M4.600 8a3 3 0 0 1 3.800 0" {...s("#fff", 1.1)} />
              <circle cx="6.500" cy="9.700" r="1" fill="#fff" />
            </svg>
          </TrayButton>
          <TrayButton $w={16} aria-label="Ses">
            <svg width="12" height="11" viewBox="0 0 12 11">
              <path d="M.8 4h2l3-2.700v8.400L2.800 7h-2zM7.500 4c.8 1 .8 2 0 3M9 2.500c1.700 2 1.700 4 0 6M10.300 1c2 3 2 6 0 9" {...s("#fff", 0.9)} />
            </svg>
          </TrayButton>
          <TrayButton $w={22} aria-label="Pil">
            <svg width="13" height="11" viewBox="0 0 13 11">
              <rect x="1" y="3" width="10" height="7" rx="1.500" fill="#e4e4e4" />
              <path d="M12 5v3M2 1l-1 3h3" {...s("#fff", 1.4)} />
            </svg>
          </TrayButton>
          <Clock>
            07:48
            <Sub $color="#fff">21.11.2025</Sub>
          </Clock>
        </Tray>
      </Taskbar>
    </Desktop>
  );
}
